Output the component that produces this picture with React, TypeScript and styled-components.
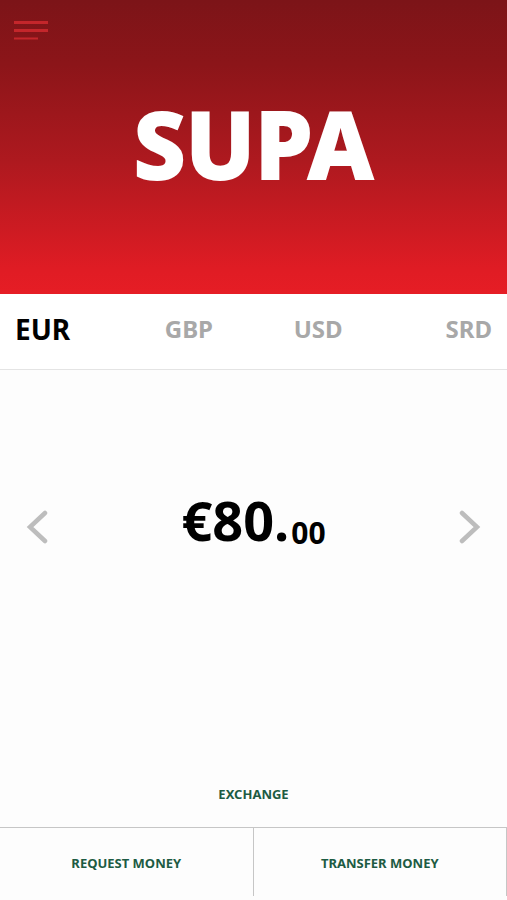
import React, { useState } from "react";
import styled, { createGlobalStyle } from "styled-components";

const GlobalStyle = createGlobalStyle`
  *, *::before, *::after { box-sizing: border-box; }
  body {
    margin: 0;
    background: #fdfdfd;
    font-family: "Noto Sans", "Open Sans", sans-serif;
    font-weight: 700;
  }
  button {
    margin: 0;
    padding: 0;
    border: 0;
    background: none;
    font: inherit;
    color: inherit;
    cursor: pointer;
  }
`;

const Screen = styled.div`
  display: flex;
  flex-direction: column;
  min-height: 100vh;
  padding-bottom: 4px;
`;

const Header = styled.header`
  display: flex;
  flex-direction: column;
  padding: 20px 14px 86px;
  background: linear-gradient(#7c1418 0%, #8c1519 22%, #ae191f 55%, #e01c24 92%, #e61d25 100%);
`;

const MenuButton = styled.button`
  align-self: flex-start;
  height: 20px;

  svg { display: block; }
`;

const Logo = styled.h1`
  margin: 40px 0 0;
  color: #fff;
  font-size: 92px;
  font-weight: 800;
  line-height: 128px;
  text-align: center;
  -webkit-text-stroke: 2px #fff;
`;

const Tabs = styled.nav`
  display: grid;
  grid-template-columns: 11fr 13fr 13fr 11fr;
  align-items: center;
  height: 76px;
  padding: 0 15px 6px;
  background: #fff;
  border-bottom: 1px solid #e4e4e4;
`;

const Tab = styled.button<{ $active: boolean }>`
  font-size: ${(p) => (p.$active ? 28 : 24)}px;
  line-height: 40px;
  color: ${(p) => (p.$active ? "#000" : "#a8a8a8")};

  &:first-child { text-align: left; }
  &:last-child { text-align: right; }
`;

const Balance = styled.main`
  display: flex;
  flex: 1;
  align-items: center;
  justify-content: space-between;
  padding: 0 26px;
`;

const Arrow = styled.button`
  display: flex;
  color: #bdbdbd;
`;

const Amount = styled.p`
  margin: 0;
  padding-bottom: 14px;
  color: #000;
  font-size: 54px;
  line-height: 84px;
`;

const Cents = styled.sub`
  margin-left: 2px;
  font-size: 30px;
  line-height: 1;
  vertical-align: -3px;
`;

const Action = styled.button`
  color: #1d5b43;
  font-size: 13px;
  line-height: 20px;
`;

const ExchangeRow = styled.div`
  display: flex;
  justify-content: center;
  padding: 100px 0 23px;
`;

const Footer = styled.footer`
  display: grid;
  grid-template-columns: 1fr 1fr;
  border-top: 1px solid #c6c6c6;

  ${Action} {
    height: 68px;
    padding-top: 2px;
    border-right: 1px solid #c6c6c6;
  }
`;

const currencies = ["EUR", "GBP", "USD", "SRD"];

export default function App() {
  const [active, setActive] = useState("EUR");
  const step = (by: number) =>
    setActive((c) => currencies[(currencies.indexOf(c) + by + currencies.length) % currencies.length]);

  return (
    <>
      <GlobalStyle />
      <Screen>
        <Header>
          <MenuButton aria-label="Menu">
            <svg width="34" height="20" fill="none" stroke="#c4262b" strokeWidth="3">
              <path d="M0 2.5H34M0 10.5H34" />
              <path d="M0 18.5H24" strokeWidth="2" />
            </svg>
          </MenuButton>
          <Logo>SUPA</Logo>
        </Header>
        <Tabs aria-label="Currency">
          {currencies.map((c) => (
            <Tab key={c} $active={c === active} aria-pressed={c === active} onClick={() => setActive(c)}>
              {c}
            </Tab>
          ))}
        </Tabs>
        <Balance>
          <Arrow aria-label="Previous currency" onClick={() => step(-1)}>
            <svg width="23" height="34" fill="none" stroke="currentColor" strokeWidth="4.5" strokeLinecap="round">
              <path d="M19 3L4 17L19 31" />
            </svg>
          </Arrow>
          <Amount>
            €80.<Cents>00</Cents>
          </Amount>
          <Arrow aria-label="Next currency" onClick={() => step(1)}>
            <svg width="23" height="34" fill="none" stroke="currentColor" strokeWidth="4.5" strokeLinecap="round">
              <path d="M4 3L19 17L4 31" />
            </svg>
          </Arrow>
        </Balance>
        <ExchangeRow>
          <Action>EXCHANGE</Action>
        </ExchangeRow>
        <Footer>
          <Action>REQUEST MONEY</Action>
          <Action>TRANSFER MONEY</Action>
        </Footer>
      </Screen>
    </>
  );
}
